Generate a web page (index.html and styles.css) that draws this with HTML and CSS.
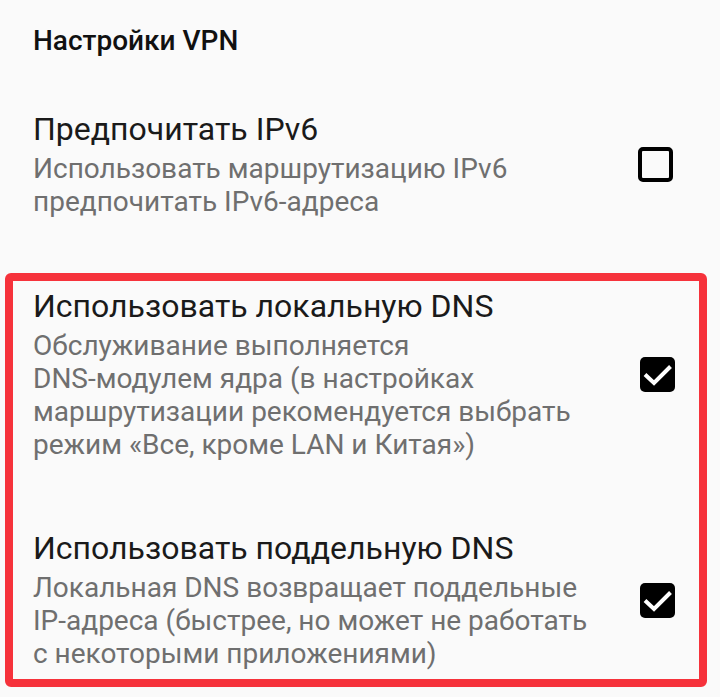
FILE: index.html
```html
<!DOCTYPE html>
<html lang="ru">
<head>
<meta charset="utf-8">
<title>Настройки VPN</title>
<link rel="stylesheet" href="styles.css">
</head>
<body>
<main class="screen">
  <h1 class="section-title">Настройки VPN</h1>

  <div class="pref pref-first">
    <div class="pref-text">
      <div class="pref-title">Предпочитать IPv6</div>
      <div class="pref-summary">Использовать маршрутизацию IPv6<br>предпочитать IPv6-адреса</div>
    </div>
    <span class="checkbox"></span>
  </div>

  <section class="highlight">
    <div class="pref pref-local">
      <div class="pref-text">
        <div class="pref-title">Использовать локальную DNS</div>
        <div class="pref-summary">Обслуживание выполняется<br>DNS-модулем ядра (в настройках<br>маршрутизации рекомендуется выбрать<br>режим «Все, кроме LAN и Китая»)</div>
      </div>
      <span class="checkbox checked"><svg viewBox="0 0 35 35" width="35" height="35"><polyline points="5,17.5 14,26 30.5,9.5" fill="none" stroke="#fff" stroke-width="4"/></svg></span>
    </div>

    <div class="pref pref-fake">
      <div class="pref-text">
        <div class="pref-title">Использовать поддельную DNS</div>
        <div class="pref-summary">Локальная DNS возвращает поддельные<br>IP-адреса (быстрее, но может не работать<br>с некоторыми приложениями)</div>
      </div>
      <span class="checkbox checked"><svg viewBox="0 0 35 35" width="35" height="35"><polyline points="5,17.5 14,26 30.5,9.5" fill="none" stroke="#fff" stroke-width="4"/></svg></span>
    </div>
  </section>
</main>
</body>
</html>
```

FILE: styles.css
```css
html, body {
  margin: 0;
  padding: 0;
  background: #fafafa;
}

body {
  font-family: Roboto, "Noto Sans", "DejaVu Sans", sans-serif;
  color: #1c1c1c;
}

.screen {
  width: 720px;
  height: 697px;
  overflow: hidden;
}

.section-title {
  margin: 0;
  padding: 25px 0 0 33px;
  font-size: 28px;
  line-height: 32px;
  font-weight: 500;
  color: #111;
}

.pref {
  display: flex;
  align-items: center;
  justify-content: space-between;
}

.pref-text {
  min-width: 0;
}

.pref-first {
  margin-top: 54px;
  padding: 0 47px 0 33px;
}

.pref-title {
  font-size: 32px;
  line-height: 36px;
  color: #1a1a1a;
  white-space: nowrap;
}

.pref-summary {
  margin-top: 5px;
  font-size: 28px;
  line-height: 33px;
  color: #6f6f6f;
  white-space: nowrap;
}

.checkbox {
  flex: none;
  width: 35px;
  height: 35px;
  box-sizing: border-box;
  border: 4px solid #000;
  border-radius: 5px;
  display: flex;
}

.checkbox.checked {
  border: none;
  background: #000;
}

.highlight {
  margin: 55px 13px 0 5px;
  border: 8px solid #f6323b;
  border-radius: 6px;
  padding: 7px 24px 9px 20px;
}

.pref-fake {
  margin-top: 69px;
}
```
